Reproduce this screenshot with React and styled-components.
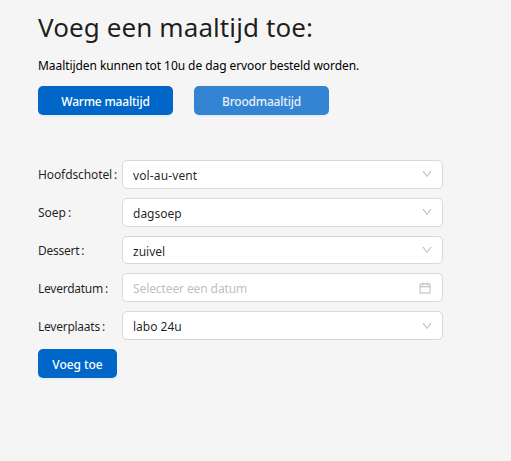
import React from "react";
import styled, { createGlobalStyle } from "styled-components";
import { AiOutlineDown, AiOutlineCalendar } from "react-icons/ai";

const GlobalStyle = createGlobalStyle`
  *, *::before, *::after { box-sizing: border-box; }
  body {
    margin: 0;
    background: #f5f5f5;
    color: rgba(0, 0, 0, 0.88);
    font-family: "Segoe UI", "Noto Sans", sans-serif;
    font-size: 12px;
  }
`;

const Page = styled.main`
  min-height: 461px;
  padding: 10px 0 0 38px;
`;

const Title = styled.h1`
  margin: 0;
  font-size: 26px;
  font-weight: 450;
  line-height: 35px;
  letter-spacing: 0.1px;
  white-space: nowrap;
`;

const Note = styled.p`
  margin: 11px 0 0;
  color: #000;
  line-height: 20px;
  letter-spacing: -0.07px;
  white-space: nowrap;
`;

const MealTypes = styled.div`
  display: flex;
  gap: 21px;
  margin: 10px 0 45px;
`;

const Button = styled.button`
  width: ${({ $width }) => $width}px;
  height: 29px;
  padding: 2px 0 0;
  border: 0;
  border-radius: 5px;
  background: ${({ $muted }) => ($muted ? "#3385d3" : "#0067c8")};
  color: ${({ $muted }) => ($muted ? "#e6f0fa" : "#fff")};
  box-shadow: 0 2px 0 rgba(5, 145, 255, 0.06);
  font: 500 12px/27px "Segoe UI", "Noto Sans", sans-serif;
  letter-spacing: ${({ $spacing }) => $spacing || "-0.2px"};
  white-space: nowrap;
`;

const Form = styled.form`
  display: flex;
  flex-direction: column;
  gap: 9px;
  width: 405px;
`;

const Row = styled.div`
  display: grid;
  grid-template-columns: 84px 321px;
  height: 28.8px;
`;

const Label = styled.span`
  line-height: ${({ $line }) => $line || 30}px;
  letter-spacing: ${({ $spacing }) => $spacing};
  white-space: nowrap;

  &::after {
    content: ":";
    margin-left: 2px;
  }
`;

const Field = styled.div`
  display: flex;
  align-items: center;
  justify-content: space-between;
  height: 28.8px;
  padding: 0 9px 0 10px;
  border: 1px solid #d9d9d9;
  border-radius: 5px;
  background: #fff;
  color: ${({ $empty }) => ($empty ? "#bfbfbf" : "rgba(0, 0, 0, 0.88)")};

  svg {
    flex: none;
    width: ${({ $empty }) => ($empty ? 14 : 12)}px;
    height: ${({ $empty }) => ($empty ? 14 : 12)}px;
    margin-right: ${({ $empty }) => ($empty ? 1 : 0)}px;
    color: #b8b8b8;
  }
`;

const Value = styled.span`
  padding-top: 2px;
  line-height: 27px;
  letter-spacing: ${({ $spacing }) => $spacing};
`;

const fields = [
  { label: "Hoofdschotel", value: "vol-au-vent", ls: "-0.1px", vs: "0.12px" },
  { label: "Soep", value: "dagsoep", ls: "0px", vs: "0px" },
  { label: "Dessert", value: "zuivel", ls: "-0.25px", vs: "0px" },
  { label: "Leverdatum", value: "Selecteer een datum", ls: "-0.25px", vs: "-0.1px", line: 31, date: true },
  { label: "Leverplaats", value: "labo 24u", ls: "-0.25px", vs: "0px", line: 31 },
];

export default function App() {
  return (
    <Page>
      <GlobalStyle />
      <Title>Voeg een maaltijd toe:</Title>
      <Note>Maaltijden kunnen tot 10u de dag ervoor besteld worden.</Note>
      <MealTypes>
        <Button $width={135} $spacing="-0.2px">Warme maaltijd</Button>
        <Button $width={135} $muted $spacing="-0.22px">Broodmaaltijd</Button>
      </MealTypes>
      <Form onSubmit={(e) => e.preventDefault()}>
        {fields.map(({ label, value, ls, vs, line, date }) => (
          <Row key={label}>
            <Label $spacing={ls} $line={line}>{label}</Label>
            <Field $empty={date}>
              <Value $spacing={vs}>{value}</Value>
              {date ? <AiOutlineCalendar /> : <AiOutlineDown />}
            </Field>
          </Row>
        ))}
        <Button $width={79} $spacing="-0.05px">Voeg toe</Button>
      </Form>
    </Page>
  );
}
